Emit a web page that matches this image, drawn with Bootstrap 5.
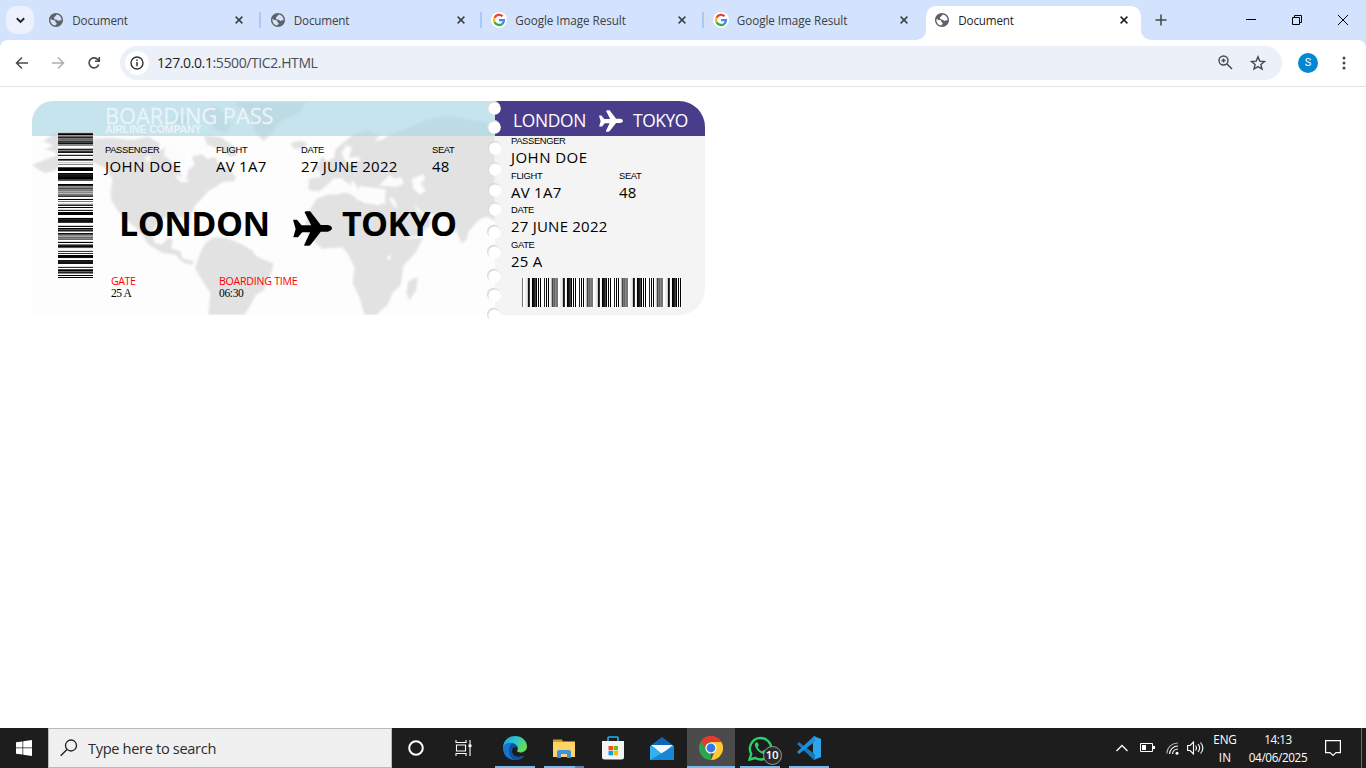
<!DOCTYPE html>
<html lang="en">
<head>
<meta charset="utf-8">
<title>Document</title>
<link rel="stylesheet" href="https://cdn.jsdelivr.net/npm/bootstrap@5.3.0/dist/css/bootstrap.min.css">
<style>
html,body{height:100%;overflow:hidden}
body{font-family:"Open Sans","Noto Sans",sans-serif;color:#000;background:#fff}
svg{display:block;flex:none}
[data-w]{white-space:nowrap;display:block}
.strip{height:40px;background:#d3e3fd}
.drop{width:28px;height:28px;margin:6px 4px 0 6px;border-radius:10px;background:#ebf1fd}
.tabx{width:221.5px;height:40px;padding:0 0 0 11.300px;font-size:11.7px;line-height:16px;color:#3d4043;position:relative}
.tabx .ttl{width:159px;margin-left:9px}
.tabx.split::after{content:"";position:absolute;right:-1px;top:12px;width:2px;height:16px;background:#a8c7fa}
.live{color:#1f1f1f}
.live::before{content:"";position:absolute;left:2px;top:6px;width:215px;height:34px;background:#fff;border-radius:10px 10px 0 0}
.live>*{position:relative}
.flare{position:absolute!important;bottom:0;width:10px;height:10px}
.tools{height:47px;border-bottom:1px solid #dfe1e5;padding:0 0 1px 0}
.cornered{background:#d3e3fd}
.cornered>.tools{background:#fff;border-radius:8px 8px 0 0}
.omni{width:1162px;height:34px;border-radius:17px;background:#ecf0f9;margin-left:19px;padding-left:5px;font-size:14px}
.info{width:24px;height:24px;border-radius:50%;background:#fff}
.avatar{width:20px;height:20px;border-radius:50%;background:#0288d1;color:#fff;font-size:11px;line-height:20px;margin-left:16px;font-family:Roboto,sans-serif}
.page{height:641px;padding:14px 0 0 32px}
.pass{height:214px;width:673px;position:relative}
.mainpart{width:463px;background:#fdfdfd;border-radius:21px 0 0 0;position:relative;overflow:hidden}
.map{position:absolute;inset:0}
.layer{position:relative}
.sky{height:35px;background:rgba(173,216,230,.7);padding:3px 0 0 73px;color:#ecf3f6}
.sky .big{font-size:21.8px;line-height:24px;-webkit-text-stroke:.3px #ecf3f6}
.sky .sub{font:bold 10.5px/12px "Liberation Sans",sans-serif;margin-top:-5px}
.code{width:35px;height:147px;margin:-4px 0 0 26px}
.lab{font:9.4px/12px "Liberation Sans",sans-serif}
.val{font-size:15px;line-height:20px}
.cities{font-weight:700;font-size:34px;line-height:40px;margin:27px 0 0 14px}
.foot{font-size:10.6px;line-height:12px;margin:29px 0 0 6px}
.foot .num{font-family:"Liberation Serif",serif;font-size:11.5px}
.stub{width:210px;background:#f4f4f4;border-radius:0 26px 26px 0;overflow:hidden}
.head2{height:35px;background:#483d8b;color:#fff;font-size:17.4px;line-height:36px;padding:1px 0 0 18px}
.stubbody{padding-left:16px;margin-top:-1px}
.field{height:34.6px}
.holes{position:absolute;left:454px;top:-2px}
.bar{height:40px;background:#1d1d1d;color:#fff}
.search{width:344px;height:40px;background:#f0f0f0;border:1px solid #b9b9b9;padding-left:10px;color:#2b2b2b;font-size:14.6px}
.cell{width:49px;height:40px;position:relative}
.cell.run::after{content:"";position:absolute;left:4.5px;right:4.5px;bottom:0;height:2px;background:#76b9ed}
.cell.files::after{background:linear-gradient(90deg,#76b9ed 31px,#5484ad 31px)}
.cell.now{background:linear-gradient(#4b4b4b,#4b4b4b) .5px 0/48px 100% no-repeat}
.cell.now::after{left:.5px;right:.5px}
.clock{font-size:11.7px;line-height:18px;margin-top:-1px}
.unread{position:absolute;left:27px;top:18px;width:19px;height:19px;border:1px solid #999;border-radius:50%;background:#2b2b2b;font-size:11.500px;line-height:16px;font-weight:600}
</style>
</head>
<body class="d-flex flex-column m-0">
<svg width="0" height="0" class="position-absolute">
<defs>
<symbol id="globe" viewBox="2 2 20 20"><path d="M12 2C6.480 2 2 6.480 2 12s4.480 10 10 10 10-4.480 10-10S17.520 2 12 2zm-1 17.930c-3.950-.49-7-3.850-7-7.930 0-.62.080-1.210.21-1.790C5.500 11.500 6.500 12 8.500 12c2 0 2.500 1 2.500 2.500s2 1 2 2.500-1.200 1.200-2 2.930zM20 12.500h-2.500c-1 1-2.500 1-3.500 0-1-1.500-3-.5-4-1.500s-1.500-3 .5-4S12 4.500 13.500 4.150C17.500 4.800 20 8 20 12.500z" fill="#5f6368"/></symbol>
<symbol id="goog" viewBox="0 0 16 16"><circle cx="8" cy="8" r="8" fill="#fff"/><g fill="none" stroke-width="2.300"><path d="M11.600 4.300A5 5 0 0 0 3.600 5.700" stroke="#ea4335"/><path d="M3.600 5.600a5 5 0 0 0 0 4.800" stroke="#fbbc05"/><path d="M3.600 10.300a5 5 0 0 0 7.700 1.500" stroke="#34a853"/><path d="M8 8.100h5a5 5 0 0 1-1.700 3.700" stroke="#4285f4"/></g></symbol>
<symbol id="cross" viewBox="0 0 8 8"><path d="M.6.600l6.800 6.800M7.400.600L.6 7.400" stroke="currentColor" stroke-width="1.500"/></symbol>
<symbol id="plane" viewBox="0 0 118 105"><path d="M2 26h10l14 17h29L35 3q0-3 6-3h11l32 42h21q13 3 13 10t-13 10H84L54 101q-2 4-8 4H36q-3 0-2-3l18-38H28L15 79H2q-2-1 0-4l6-21-7-24q-1-4 1-4z" fill="currentColor"/></symbol>
</defs></svg>

<header class="strip d-flex">
  <div class="drop d-flex align-items-center justify-content-center"><svg width="9" height="7" viewBox="0 0 8 6"><path d="M.7 1l3.300 3.300L7.300 1" fill="none" stroke="#1f1f1f" stroke-width="1.600"/></svg></div>
  <div class="tabx split d-flex align-items-center"><svg width="14" height="14"><use href="#globe"/></svg><div class="ttl"><span data-w="55">Document</span></div><svg class="ms-1" width="8" height="8"><use href="#cross"/></svg></div>
  <div class="tabx split d-flex align-items-center"><svg width="14" height="14"><use href="#globe"/></svg><div class="ttl"><span data-w="55">Document</span></div><svg class="ms-1" width="8" height="8"><use href="#cross"/></svg></div>
  <div class="tabx split d-flex align-items-center"><svg width="16" height="16" style="margin:0 -1px"><use href="#goog"/></svg><div class="ttl"><span data-w="110">Google Image Result</span></div><svg class="ms-1" width="8" height="8"><use href="#cross"/></svg></div>
  <div class="tabx d-flex align-items-center"><svg width="16" height="16" style="margin:0 -1px"><use href="#goog"/></svg><div class="ttl"><span data-w="110">Google Image Result</span></div><svg class="ms-1" width="8" height="8"><use href="#cross"/></svg></div>
  <div class="tabx live d-flex align-items-center"><svg class="flare" style="left:-8px" viewBox="0 0 10 10"><path d="M10 0v10H0A10 10 0 0 0 10 0" fill="#fff"/></svg><svg class="flare" style="left:217px" viewBox="0 0 10 10"><path d="M0 0v10h10A10 10 0 0 1 0 0" fill="#fff"/></svg><svg width="14" height="14"><use href="#globe"/></svg><div class="ttl"><span data-w="55">Document</span></div><svg style="margin-left:3px" width="8" height="8"><use href="#cross"/></svg></div>
  <svg class="mt-3" style="margin-left:8.500px" width="12" height="10" viewBox="0 0 12 10" overflow="visible"><path d="M7 -1.500v11M1.500 4h11" stroke="#444" stroke-width="1.500"/></svg>
  <div class="d-flex ms-auto align-items-center" style="gap:36px;padding-right:18px">
    <svg width="10" height="10"><path d="M0 4.500h10" stroke="#000"/></svg>
    <svg width="10" height="10"><path d="M.5 2.500h7v7h-7zM2.500 2.500v-2h7v7h-2" fill="none" stroke="#000"/></svg>
    <svg width="10" height="10"><path d="M0 0l10 10M10 0L0 10" stroke="#000"/></svg>
  </div>
</header>
<div class="cornered"><nav class="tools d-flex align-items-center">
  <svg style="margin-left:15px" width="14" height="14" viewBox="0 0 14 14"><path d="M13 7H2M7 1.500L1.500 7 7 12.500" fill="none" stroke="#46484b" stroke-width="1.500"/></svg>
  <svg style="margin-left:22px" width="14" height="14" viewBox="0 0 14 14"><path d="M1 7h11M7 1.500L12.500 7 7 12.500" fill="none" stroke="#acaeb1" stroke-width="1.500"/></svg>
  <svg style="margin-left:22px" width="14" height="14" viewBox="0 0 14 14"><path d="M11.800 8.500A5 5 0 1 1 11 3.800l1 1M12.300 1v4.200H8" fill="none" stroke="#46484b" stroke-width="1.600"/></svg>
  <div class="omni d-flex align-items-center">
    <span class="info d-flex align-items-center justify-content-center"><svg width="14" height="14" viewBox="0 0 14 14"><circle cx="7" cy="7" r="6" fill="none" stroke="#333" stroke-width="1.400"/><path d="M7 6v4.200M7 3.600v1.400" stroke="#333" stroke-width="1.500"/></svg></span>
    <div style="margin-left:8px;color:#4a4d51"><span data-w="160"><span style="color:#1f1f1f">127.0.0.1</span>:5500/TIC2.HTML</span></div>
    <svg class="ms-auto" width="15" height="15" viewBox="0 0 15 15"><path d="M9 9l5 5M5.500 3.500v4M3.500 5.500h4" stroke="#46484b" stroke-width="1.500"/><circle cx="5.500" cy="5.500" r="4.500" fill="none" stroke="#46484b" stroke-width="1.400"/></svg>
    <svg style="margin:0 16px 0 17px" width="16" height="16" viewBox="0 0 16 16"><path d="M8 1.800l1.800 4.300 4.700.4-3.600 3 1.100 4.600-4-2.500-4 2.500 1.100-4.600-3.600-3 4.700-.4z" fill="none" stroke="#46484b" stroke-width="1.400"/></svg>
  </div>
  <div class="avatar text-center">S</div>
  <svg style="margin-left:24px" width="4" height="14"><g fill="#46484b"><circle cx="2" cy="2" r="1.500"/><circle cx="2" cy="7" r="1.500"/><circle cx="2" cy="12" r="1.500"/></g></svg>
</nav></div>

<main class="page">
  <section class="pass d-flex">
    <div class="mainpart">
      <svg class="map" width="463" height="214" viewBox="24 27 1389 642"><defs><filter id="soft"><feGaussianBlur stdDeviation="2.500"/></filter></defs>
        <g fill="#e2e2e2" filter="url(#soft)">
          <path d="M24 220l36-16 40-14-8-10-28-8 24-12-30-12 30-22 50-4 50 18 80-2 60 6 44-10 36 20-6 24 24-12 30 16-12 26 20 14 10 34 14 4 4-26 20-14-8-26 30-8 16 16 24-8 10 22 30 16 22 22-6 14-34 2-20 14-20 10-24 26-20 22-12 28-2 34-8-6-8-22-30-2-36 4-22 24-10 22 8 28 22 6 18-20 14 4-4 28 26 6 8 24 34 8-4 10-28-6-24-24-40-6-40-24-16-24-26-30-30-24-26-32-14-24-2-30 6-30-18-34-44-20-46-10-40 14-26 22-30 8z"/>
          <path d="M530 480l14-28 26-16 38 2 36 14 42 24 12 18 50 20-4 22-12 24-14 36-24 14-14 30-20 29H553l6-66-22-34-24-40z"/>
          <path d="M540 60l30-20 30 20 20 40-10 20-30-4-20-20zM440 80l40-12 20 20-30 14zM540 130l50 6 44 30 6 24-24 4-26-22-40-14z"/>
          <path d="M630 30h215l-18 34-58 24-24 36-26 22-26-24-8-46-32-20z"/>
          <path d="M800 152l34-6 18 10-14 12-30 2z"/>
          <path d="M888 200l12-4 12 22 8 18-34 4z"/>
          <path d="M1413 95V388l-24-14-20 6-34 36-8 28-14 10-20-44-12-34-34-6-52-6-24-26 10 22 20 12 22 8-6 22-34 26-40 14-10-4-16-44-30-48-4-24 2-30-60-8-20-2 2 16-20-34-10 20-24-26-24 2-20 20-24 18-32-4 2-34 34-6-2-18-22-8 30-16 36-14 2-24 20-18 34-28 44-14 36 16-14 18 24-6 20-14 60-22 54-24 60-10 50 8z"/>
          <path d="M878 320l30-12 70-8 26 24 52 10 46 2 16 42 30 64 50-6-22 44-38 42-8 58-24 22-14 34-36 34h-34l-16-54-20-44 6-46-22-42-16-18-60 4-40-36-10-40 8-32z"/>
          <path d="M1153 568l28-14-4 38-20 34-10-24z"/>
        </g>
        <g fill="#fcfcfc" filter="url(#soft)"><path d="M1066 282l12-16 22-18 8 12 24-4 8 18-20 10-34-2zM1164 260l34-14 6 14-14 14 16 22-18 12-20-18zM922 296l32-26 18 2 14 24 24 16 44-8 24 12-12 24-46-8-28-20-32-16-26 12zM1088 496l10-8 4 10-10 6zM425 158l34 14 24 0-6 24 8 26-24 6-24-24-18-16zM952 184l14-24 18 6-10 32 30-4 6 10-40 14zM370 190l12 6-8 14-12-6zM452 250l30 6 14 12-24 4zM1095 316l6 14 12 18 8-4-12-24z"/></g>
      </svg>
      <div class="sky layer"><span class="big" data-w="168">BOARDING PASS</span><span class="sub" data-w="96">AIRLINE COMPANY</span></div>
      <div class="d-flex layer">
        <svg class="code" data-code="left" shape-rendering="crispEdges"></svg>
        <div style="padding:8px 0 0 12px">
          <div class="d-flex">
            <div style="width:111px"><span class="lab" data-w="54">PASSENGER</span><span class="val" data-w="76">JOHN DOE</span></div>
            <div style="width:85px"><span class="lab" data-w="31">FLIGHT</span><span class="val" data-w="50">AV 1A7</span></div>
            <div style="width:131px"><span class="lab" data-w="22.500">DATE</span><span class="val" data-w="96">27 JUNE 2022</span></div>
            <div><span class="lab" data-w="22">SEAT</span><span class="val" data-w="17">48</span></div>
          </div>
          <div class="cities d-flex"><div style="width:174px"><span data-w="150">LONDON</span></div><svg width="39" height="35" style="margin-top:8px"><use href="#plane"/></svg><div style="margin-left:10px"><span data-w="114">TOKYO</span></div></div>
          <div class="foot d-flex"><div style="width:108px"><span style="color:red" data-w="24">GATE</span><span class="num" data-w="20">25 A</span></div><div><span style="color:red" data-w="78">BOARDING TIME</span><span class="num" data-w="24">06:30</span></div></div>
        </div>
      </div>
    </div>
    <div class="stub">
      <div class="head2 d-flex"><div style="width:86px"><span data-w="72.500">LONDON</span></div><svg width="24" height="22" style="margin-top:8px"><use href="#plane"/></svg><div style="margin-left:10px"><span data-w="54.500">TOKYO</span></div></div>
      <div class="stubbody">
        <div class="field"><span class="lab" data-w="54">PASSENGER</span><span class="val" data-w="76">JOHN DOE</span></div>
        <div class="field d-flex"><div style="width:108px"><span class="lab" data-w="31">FLIGHT</span><span class="val" data-w="50">AV 1A7</span></div><div><span class="lab" data-w="22">SEAT</span><span class="val" data-w="17">48</span></div></div>
        <div class="field"><span class="lab" data-w="22.500">DATE</span><span class="val" data-w="96">27 JUNE 2022</span></div>
        <div class="field"><span class="lab" data-w="23">GATE</span><span class="val" data-w="31">25 A</span></div>
        <svg data-code="right" width="160" height="29" style="margin:5px 0 0 11px" shape-rendering="crispEdges"></svg>
      </div>
    </div>
    <svg class="holes" width="18" height="224"></svg>
  </section>
</main>

<footer class="bar d-flex align-items-center">
  <div class="cell d-flex align-items-center justify-content-center" style="width:48px"><svg width="16" height="16" viewBox="0 0 16 16"><path d="M0 2.300l6.500-.9v6.200H0zM7.200 1.300L16 0v7.600H7.200zM0 8.300h6.500v6.300L0 13.700zM7.200 8.300H16V16l-8.800-1.300z" fill="#fff"/></svg></div>
  <div class="search d-flex align-items-center"><svg width="18" height="18" viewBox="0 0 18 18" style="margin-left:1px"><circle cx="11" cy="6.500" r="5.500" fill="none" stroke="#222" stroke-width="1.300"/><path d="M7 10.500L.7 16.800" stroke="#222" stroke-width="1.400"/></svg><div style="margin:1px 0 0 10px"><span data-w="127.500">Type here to search</span></div></div>
  <div class="cell d-flex align-items-center justify-content-center" style="width:48px"><svg width="16" height="16"><circle cx="8" cy="8" r="6.800" fill="none" stroke="#fff" stroke-width="2"/></svg></div>
  <div class="cell d-flex align-items-center justify-content-center" style="width:48px;margin-right:2.500px"><svg width="17" height="16" viewBox="0 0 17 16" style="margin-top:-1px;margin-left:-1px"><path d="M1 0v2.500h10V0M1 16v-2.500h10V16M1.500 5h9v6h-9zM15 0v16" fill="none" stroke="#fff" stroke-width="1.100"/><path d="M13.500 4.500h3v2.500h-3z" fill="#fff"/></svg></div>
  <div class="cell run d-flex align-items-center justify-content-center"><svg width="24" height="24" viewBox="0 0 24 24"><defs><linearGradient id="e1" x1="0" x2="1" y1="0" y2=".5"><stop offset="0" stop-color="#1f9fe0"/><stop offset=".5" stop-color="#2bc3d2"/><stop offset="1" stop-color="#66dd5a"/></linearGradient></defs><path d="M0 12C0 5 5 0 12 0s12 5 12 10.500c0 3.500-3 6-6.500 6-3 0-4-1-3-2.500 1-2.500-.5-6-5-6C5 8 1 11 0 14z" fill="url(#e1)"/><path d="M0 12c1-5 6-6 9-5 2.500.5 4.500 2 5 4-4-1-6 2-5 5.500 1 4 6 6 12.500 3-2 3-6 4.500-9.500 4.500C5 24 0 19 0 12z" fill="#1575cf"/><path d="M9 7c2.500.5 4.500 2 5 4-4-1-6 2-5 5.500 1 4 6 6 12.500 3-2 3-6 4.500-9.500 4.500C5 22 4 12 9 7z" fill="#10529f"/></svg></div>
  <div class="cell run files d-flex align-items-center justify-content-center"><svg width="22" height="19" viewBox="0 0 22 19"><path d="M0 2.500h22V18H0z" fill="#fdd465"/><path d="M0 .5h9l1 2.500H0z" fill="#dd9b13"/><path d="M4 19v-6q0-2 2-2h10q2 0 2 2v6h-4v-4H8v4z" fill="#3d93dd"/></svg></div>
  <div class="cell d-flex align-items-center justify-content-center"><svg width="24" height="24" viewBox="0 0 24 24"><path d="M7 6V2q0-1 1-1h8q1 0 1 1v4" fill="none" stroke="#20b4ea" stroke-width="1.600"/><path d="M1 5h22v16q0 2.500-2.500 2.500h-17Q1 23.500 1 21z" fill="#f4f4f4"/><path d="M7.500 10H12v4.300H7.500z" fill="#f25022"/><path d="M12.700 10H17v4.300h-4.300z" fill="#7fba00"/><path d="M7.500 15H12v4.300H7.500z" fill="#00a4ef"/><path d="M12.700 15H17v4.300h-4.300z" fill="#ffb900"/></svg></div>
  <div class="cell d-flex align-items-center justify-content-center"><svg width="24" height="23" viewBox="0 0 24 23"><path d="M0 9L12 0l12 9z" fill="#0f64b5"/><path d="M0 9h24v14H0z" fill="#1c9be4"/><path d="M1 8h22l-11 9z" fill="#f5f5f5"/><path d="M0 9l12 8 12-8v14H0z" fill="#2fb4f1"/><path d="M0 23L24 9v14z" fill="#1587d5"/></svg></div>
  <div class="cell run now d-flex align-items-center justify-content-center"><svg width="24" height="24" viewBox="0 0 24 24"><path d="M12 12L1.600 6A12 12 0 0 1 22.400 6z" fill="#e33b2e"/><path d="M12 12L1.600 6A12 12 0 0 0 12 24z" fill="#2da44e"/><path d="M12 12h5L12 24A12 12 0 0 0 22.400 6H12z" fill="#fcc934"/><path d="M1.600 6L7 15.200l5-3.200V6z" fill="#2da44e"/><path d="M1.600 6A12 12 0 0 1 22.400 6H12q-4 0-6 5z" fill="#e33b2e"/><circle cx="12" cy="12" r="5.600" fill="#fff"/><circle cx="12" cy="12" r="4.400" fill="#3478e5"/></svg></div>
  <div class="cell run d-flex align-items-center justify-content-center"><svg width="25" height="25" viewBox="0 0 25 25"><path d="M1.500 23.500l1.700-5.700A10.700 10.700 0 1 1 7.300 22z" fill="none" stroke="#27d366" stroke-width="2.400"/><path d="M8.500 6.300c-1 .4-1.700 1.400-1.600 2.700.5 4 5 8.500 9 9 1.500 0 2.700-.8 2.900-2.500l-3-1.700-1.500 1.700c-2.200-.8-3.800-2.400-4.700-4.500l1.300-1.500-1.200-3z" fill="#27d366"/></svg><span class="unread d-flex justify-content-center"><span data-w="12">10</span></span></div>
  <div class="cell run d-flex align-items-center justify-content-center"><svg width="24" height="24" viewBox="0 0 24 24"><path d="M17 0l7 3v18l-7 3-1-6V6z" fill="#2ca5ec"/><path d="M0 8l2-2 16 12.500V24h-1z" fill="#1479c0"/><path d="M0 16l2 2L18 5.500V0h-1z" fill="#1d8fdb"/></svg></div>
  <div class="ms-auto d-flex align-items-center h-100" style="padding-right:4px">
    <svg width="12" height="8" viewBox="0 0 12 8"><path d="M.5 7L6 1.500 11.500 7" fill="none" stroke="#fff" stroke-width="1.300"/></svg>
    <svg style="margin-left:12px" width="15" height="10"><path d="M.5.500h12v8H.5z" fill="none" stroke="#fff"/><path d="M2 2h4v5H2zM13 3h2v3h-2z" fill="#fff"/></svg>
    <svg style="margin-left:11px" width="13" height="13" viewBox="0 0 13 13"><g fill="none" stroke="#fff" stroke-width="1.100"><path d="M.8 11.500A11 11 0 0 1 12 1" stroke="#aaa"/><path d="M3.500 12A8.500 8.500 0 0 1 12 4"/><path d="M6.500 12A5.500 5.500 0 0 1 12 7"/></g><circle cx="11" cy="11.300" r="1.500" fill="#fff"/></svg>
    <svg style="margin-left:8px" width="17" height="14" viewBox="0 0 17 14"><path d="M.6 4.500h2.500L6.500 1v12L3.100 9.500H.6zM8.500 4.500q2 2.500 0 5M11 3q3.400 4 0 8M13.500 1.500q4.800 5.500 0 11" fill="none" stroke="#fff" stroke-width="1.100"/></svg>
    <div class="clock d-flex flex-column align-items-center" style="width:24px;margin-left:9px"><span data-w="23">ENG</span><span data-w="12">IN</span></div>
    <div class="clock d-flex flex-column align-items-center" style="width:60px;margin-left:11px"><span data-w="27">14:13</span><span data-w="58">04/06/2025</span></div>
    <svg style="margin:0 20px 0 17px" width="16" height="17"><path d="M.6.600h14.800v12H11L8 15.500 5 12.600H.6z" fill="none" stroke="#fff" stroke-width="1.200"/></svg>
    <div class="h-100" style="width:1px;background:#6a6a6a"></div>
  </div>
</footer>
<script src="https://cdn.jsdelivr.net/npm/bootstrap@5.3.0/dist/js/bootstrap.bundle.min.js"></script>
<script>
// even out the tracking so every label has its set width
document.querySelectorAll('[data-w]').forEach(function(el){
  var r=document.createRange();r.selectNodeContents(el);
  var n=el.textContent.length, w=r.getBoundingClientRect().width;
  el.style.letterSpacing=((+el.dataset.w+.5-w)/n)+'px';
});
// bar shades, one hex digit per pixel
var codes={
 left:'c309627673418 8ffb2831fc2fee16fce8ff4000ff02110045fff0288487a8b763fe0f7fd82f0fd2f000ffe02113ffc1f0528f158a686fd0f7205efd4f3f001ef1211ffd3f40628 f0f07efeed520487fe3f82810011fe',
 right:'7ffeec13fe01240f0f0fff2f0f0feb47687'.repeat(5).slice(0,160)};
codes.left=codes.left.replace(/ /g,'').slice(0,146);
document.querySelectorAll('[data-code]').forEach(function(s){
  var v=s.dataset.code==='left', h='';
  codes[s.dataset.code].split('').forEach(function(c,i){
    h+='<rect '+(v?'y':'x')+'="'+i+'" width="'+(v?35:1)+'" height="'+(v?1:29)+'" fill="#'+c+c+c+'"/>';});
  s.innerHTML=h;
});
// perforation holes
document.querySelector('.holes').innerHTML=[9,28,49,70,91,110,133,153,177,196,216].map(function(y,i){
  var x=(i>1&&i<6)?9.2:8.6;
  return '<circle cx="'+(x-1)+'" cy="'+(y-.6)+'" r="6.600" fill="#dcdcdc"/><circle cx="'+x+'" cy="'+(y+.6)+'" r="6.200" fill="#fff"/>';}).join('');
</script>
</body>
</html>
